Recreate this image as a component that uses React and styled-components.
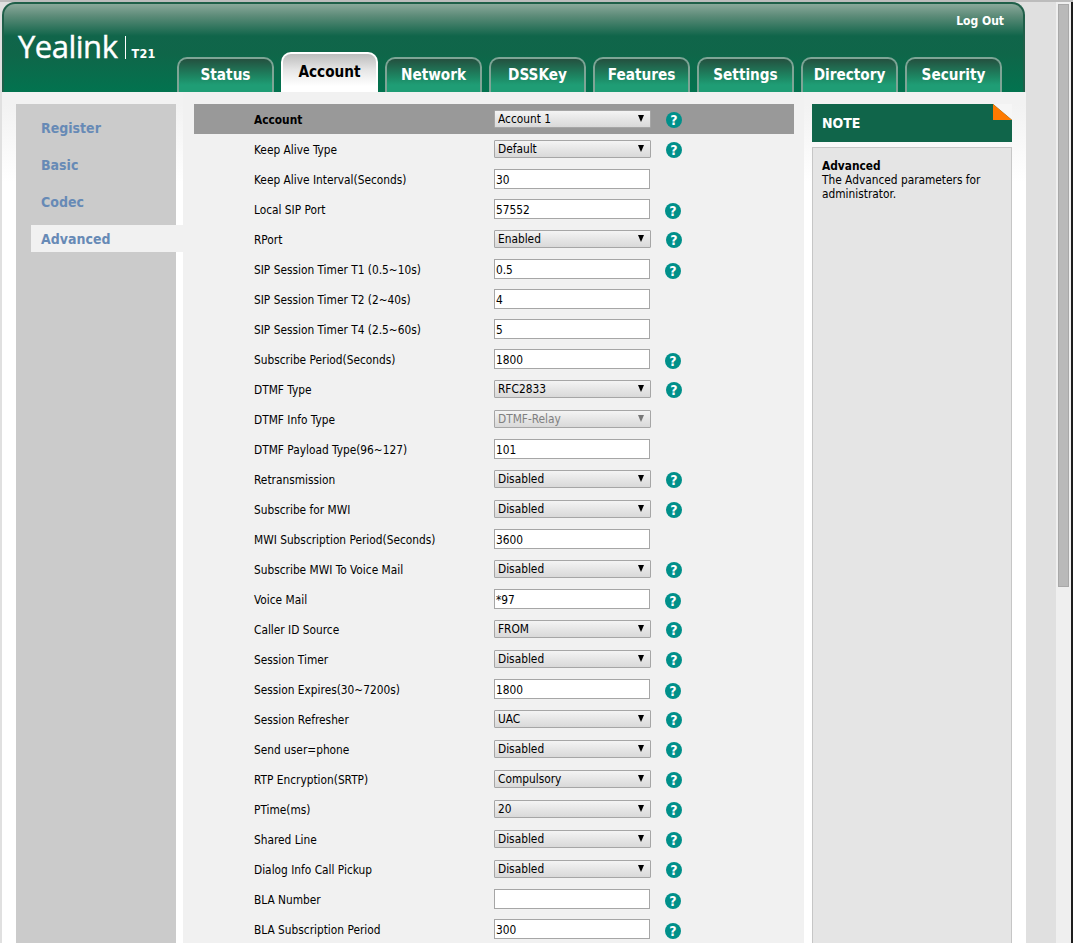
import React from "react";
import styled, { createGlobalStyle } from "styled-components";

const GlobalStyle = createGlobalStyle`
  html, body {
    margin: 0;
    padding: 0;
    height: 943px;
    overflow: hidden;
    background: #e0e0e0;
  }
  body, input, select {
    font-family: "DejaVu Sans Condensed", "DejaVu Sans", Tahoma, sans-serif;
    font-stretch: condensed;
    font-size: 11.8px;
  }
`;

const Window = styled.div`
  display: flex;
  height: 943px;
  overflow: hidden;
  border-top: 2px solid #bcbcbc;
  box-sizing: border-box;
`;

const Page = styled.div`
  width: 1024px;
  margin-left: 2px;
  display: flex;
  flex-direction: column;
  flex-shrink: 0;
`;

const Gutter = styled.div`
  width: 30px;
  flex-shrink: 0;
  background: #e0e0e0;
`;

const Scrollbar = styled.div`
  width: 15px;
  flex-shrink: 0;
  background: #efefef;
  padding: 2px 2px 0 2px;
  box-sizing: border-box;
`;

const Thumb = styled.div`
  width: 11px;
  height: 583px;
  background: #b9b9b9;
  border: 1px solid #a8a8a8;
  box-sizing: border-box;
`;

const WindowEdge = styled.div`
  flex: 1;
  background: #1d1d1d;
`;

const Header = styled.header`
  width: 1023px;
  height: 90px;
  flex-shrink: 0;
  box-sizing: border-box;
  position: relative;
  display: flex;
  align-items: flex-end;
  border: 2px solid #1f5f49;
  border-bottom: none;
  border-radius: 13px 13px 0 0;
  background: linear-gradient(#8aa99b 0, #5c8b78 12px, #10654a 32px, #0f6649 50px, #02734f 88px);
`;

const Logo = styled.div`
  position: absolute;
  left: 14px;
  top: 24px;
  display: flex;
  align-items: flex-end;
  color: #fff;
`;

const Brand = styled.span`
  font-family: "Open Sans", sans-serif;
  font-stretch: normal;
  font-weight: 500;
  font-size: 31px;
  line-height: 36px;
  letter-spacing: -0.5px;
  -webkit-text-stroke: 0.4px #fff;
`;

const Model = styled.span`
  margin-left: 8px;
  padding-left: 5px;
  height: 23px;
  border-left: 1px solid #fff;
  margin-bottom: 5px;
  display: flex;
  align-items: flex-end;
  font-family: "DejaVu Sans", sans-serif;
  font-weight: bold;
  font-size: 12.5px;
  line-height: 11px;
  letter-spacing: 0.3px;
`;

const LogOut = styled.a`
  position: absolute;
  right: 19px;
  top: 9px;
  color: #fff;
  font-weight: bold;
  font-size: 12px;
  line-height: 16px;
`;

const Tabs = styled.nav`
  display: flex;
  align-items: flex-end;
  gap: 7px;
  margin-left: 173px;
`;

const Tab = styled.a`
  width: 97px;
  height: ${({ $active }) => ($active ? "40px" : "35px")};
  box-sizing: border-box;
  display: flex;
  justify-content: center;
  align-items: center;
  border: 2px solid ${({ $active }) => ($active ? "#fff" : "#7ea596")};
  border-bottom: none;
  border-radius: 10px 10px 0 0;
  font-weight: bold;
  font-size: 15.2px;
  color: ${({ $active }) => ($active ? "#000" : "#fff")};
  background: ${({ $active }) =>
    $active
      ? "linear-gradient(#bdbdbd 0, #e6e6e6 16px, #fff 32px)"
      : "linear-gradient(#24503f 0, #1d8763 18px, #1f9d75 26px, #1f9d75 100%)"};
  padding-bottom: 2px;
`;

const Body = styled.div`
  flex: 1;
  min-height: 0;
  display: flex;
  align-items: flex-start;
  padding: 12px 0 0 14px;
  background: linear-gradient(#f2f2f2 0, #f2f2f2 12px, #fff 90px);
`;

const Sidebar = styled.aside`
  width: 160px;
  height: 900px;
  flex-shrink: 0;
  background: #cbcbcb;
  padding-top: 10px;
  box-sizing: border-box;
  display: flex;
  flex-direction: column;
  gap: 10px;
`;

const SideItem = styled.a`
  display: block;
  height: 27px;
  line-height: 29px;
  margin-left: ${({ $active }) => ($active ? "15px" : "25px")};
  margin-right: ${({ $active }) => ($active ? "-7px" : "0")};
  padding-left: ${({ $active }) => ($active ? "10px" : "0")};
  background: ${({ $active }) => ($active ? "#f1f1f1" : "transparent")};
  color: #678ab6;
  font-weight: bold;
  font-size: 14px;
`;

const Main = styled.main`
  width: 621px;
  height: 920px;
  margin-left: 7px;
  margin-top: -12px;
  padding: 12px 10px 0 11px;
  box-sizing: border-box;
  flex-shrink: 0;
  background: #f1f1f1;
`;

const Row = styled.div`
  height: 30px;
  display: grid;
  grid-template-columns: 240px 157px 15px 16px;
  align-items: center;
  padding-left: 60px;
  color: #000;
  background: ${({ $head }) => ($head ? "#999" : "transparent")};
  font-weight: ${({ $head }) => ($head ? "bold" : "normal")};
`;

const Label = styled.label`
  line-height: 16px;
  margin-top: 2px;
`;

const SelectWrap = styled.div`
  position: relative;
  width: 157px;
  height: 18px;
  margin-top: -1px;

  &::after {
    content: "";
    position: absolute;
    right: 7px;
    top: 5px;
    border-left: 3.5px solid transparent;
    border-right: 3.5px solid transparent;
    border-top: 7px solid ${({ $disabled }) => ($disabled ? "#777" : "#000")};
  }
`;

const Select = styled.select`
  appearance: none;
  display: block;
  width: 100%;
  height: 18px;
  margin: 0;
  padding: 0 0 0 3px;
  box-sizing: border-box;
  border: 1px solid #a6a6a6;
  border-radius: 1px;
  background: linear-gradient(#f4f4f4, #e6e6e6 50%, #d9d9d9);
  color: #000;
  font-size: 11.8px;
  font-weight: normal;
  line-height: 16px;

  &:disabled {
    color: #808080;
    opacity: 1;
  }
`;

const Input = styled.input`
  display: block;
  width: 156px;
  height: 20px;
  margin: 0;
  padding: 1px 1px 0;
  box-sizing: border-box;
  border: 1px solid #a6a6a6;
  background: #fff;
  color: #000;
  font-size: 11.8px;
`;

const Help = styled.span`
  width: 16px;
  height: 16px;
  margin-left: ${({ $input }) => ($input ? "-1px" : "0")};
  margin-top: ${({ $input }) => ($input ? "3px" : "1px")};
  border-radius: 50%;
  background: #00908a;
  color: #fff;
  font-weight: bold;
  font-size: 14px;
  line-height: 16px;
  text-align: center;
`;

const NoteColumn = styled.aside`
  width: 200px;
  margin-left: 8px;
  flex-shrink: 0;
  display: flex;
  flex-direction: column;
  gap: 5px;
`;

const NoteHead = styled.div`
  position: relative;
  height: 38px;
  line-height: 38px;
  padding-left: 10px;
  background: #10654a;
  color: #fff;
  font-weight: bold;
  font-size: 14px;
  overflow: hidden;

  &::before {
    content: "";
    position: absolute;
    top: 0;
    right: 0;
    width: 19px;
    height: 16px;
    background: #f6f6f6;
    clip-path: polygon(0 0, 100% 0, 100% 100%);
  }

  &::after {
    content: "";
    position: absolute;
    top: 0;
    right: 0;
    width: 19px;
    height: 16px;
    background: #ff7a00;
    clip-path: polygon(0 0, 100% 100%, 0 100%);
  }
`;

const NoteBody = styled.div`
  height: 850px;
  padding: 11px 9px;
  box-sizing: border-box;
  background: #e5e5e5;
  border: 1px solid #c6c6c6;
  color: #000;
  line-height: 14px;
`;

const NoteTitle = styled.div`
  font-weight: bold;
`;

const tabs = ["Status", "Account", "Network", "DSSKey", "Features", "Settings", "Directory", "Security"];
const sideItems = ["Register", "Basic", "Codec", "Advanced"];

const rows = [
  { label: "Keep Alive Type", select: "Default", help: true },
  { label: "Keep Alive Interval(Seconds)", input: "30" },
  { label: "Local SIP Port", input: "57552", help: true },
  { label: "RPort", select: "Enabled", help: true },
  { label: "SIP Session Timer T1 (0.5~10s)", input: "0.5", help: true },
  { label: "SIP Session Timer T2 (2~40s)", input: "4" },
  { label: "SIP Session Timer T4 (2.5~60s)", input: "5" },
  { label: "Subscribe Period(Seconds)", input: "1800", help: true },
  { label: "DTMF Type", select: "RFC2833", help: true },
  { label: "DTMF Info Type", select: "DTMF-Relay", disabled: true },
  { label: "DTMF Payload Type(96~127)", input: "101" },
  { label: "Retransmission", select: "Disabled", help: true },
  { label: "Subscribe for MWI", select: "Disabled", help: true },
  { label: "MWI Subscription Period(Seconds)", input: "3600" },
  { label: "Subscribe MWI To Voice Mail", select: "Disabled", help: true },
  { label: "Voice Mail", input: "*97", help: true },
  { label: "Caller ID Source", select: "FROM", help: true },
  { label: "Session Timer", select: "Disabled", help: true },
  { label: "Session Expires(30~7200s)", input: "1800", help: true },
  { label: "Session Refresher", select: "UAC", help: true },
  { label: "Send user=phone", select: "Disabled", help: true },
  { label: "RTP Encryption(SRTP)", select: "Compulsory", help: true },
  { label: "PTime(ms)", select: "20", help: true },
  { label: "Shared Line", select: "Disabled", help: true },
  { label: "Dialog Info Call Pickup", select: "Disabled", help: true },
  { label: "BLA Number", input: "", help: true },
  { label: "BLA Subscription Period", input: "300", help: true },
];

const Field = ({ row }) =>
  row.select !== undefined ? (
    <SelectWrap $disabled={row.disabled}>
      <Select defaultValue={row.select} disabled={row.disabled}>
        <option>{row.select}</option>
      </Select>
    </SelectWrap>
  ) : (
    <Input defaultValue={row.input} />
  );

export default function App() {
  return (
    <>
      <GlobalStyle />
      <Window>
        <Page>
          <Header>
            <Logo>
              <Brand>Yealink</Brand>
              <Model>T21</Model>
            </Logo>
            <LogOut>Log Out</LogOut>
            <Tabs>
              {tabs.map((t) => (
                <Tab key={t} $active={t === "Account"}>
                  {t}
                </Tab>
              ))}
            </Tabs>
          </Header>
          <Body>
            <Sidebar>
              {sideItems.map((s) => (
                <SideItem key={s} $active={s === "Advanced"}>
                  {s}
                </SideItem>
              ))}
            </Sidebar>
            <Main>
              <Row $head>
                <Label>Account</Label>
                <Field row={{ select: "Account 1" }} />
                <span />
                <Help>?</Help>
              </Row>
              {rows.map((r) => (
                <Row key={r.label}>
                  <Label>{r.label}</Label>
                  <Field row={r} />
                  <span />
                  {r.help ? <Help $input={r.input !== undefined}>?</Help> : <span />}
                </Row>
              ))}
            </Main>
            <NoteColumn>
              <NoteHead>NOTE</NoteHead>
              <NoteBody>
                <NoteTitle>Advanced</NoteTitle>
                The Advanced parameters for administrator.
              </NoteBody>
            </NoteColumn>
          </Body>
        </Page>
        <Gutter />
        <Scrollbar>
          <Thumb />
        </Scrollbar>
        <WindowEdge />
      </Window>
    </>
  );
}
